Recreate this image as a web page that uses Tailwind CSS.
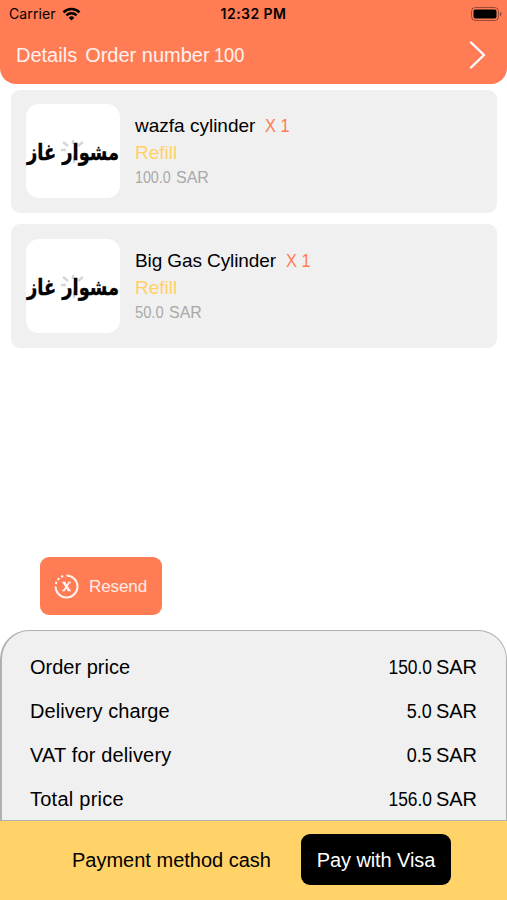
<!DOCTYPE html>
<html lang="en">
<head>
    <meta charset="UTF-8">
    <meta name="viewport" content="width=device-width, initial-scale=1.0">
    <title>Order Details</title>
    <script src="https://cdn.jsdelivr.net/npm/@tailwindcss/browser@4"></script>
</head>
<body class="bg-white font-['Liberation_Sans',Arial,sans-serif] text-xl text-black">
<div class="w-[507px] h-[900px] flex flex-col overflow-hidden">

  <!-- Header -->
  <header class="h-[84px] shrink-0 bg-[#ff7c54] rounded-b-[16px]">
    <div class="h-[27px] px-[9px] grid grid-cols-3 items-center font-[Inter,sans-serif] text-[14px]">
      <div class="flex items-center gap-[6px]">
        <span class="tracking-[0.1px]">Carrier</span>
        <svg width="19" height="14" viewBox="0 0 18 14" fill="none" stroke="#000" stroke-width="2.5">
          <path d="M1 5.3a11.5 11.5 0 0 1 16 0M3.9 8.4a7.4 7.4 0 0 1 10.2 0" />
          <path d="M9 13.5 6.2 10.7a4 4 0 0 1 5.6 0z" fill="#000" stroke="none" />
        </svg>
      </div>
      <span class="text-center font-semibold whitespace-nowrap tracking-[0.45px]">12:32 PM</span>
      <svg class="justify-self-end -mr-[4px]" width="31" height="14" viewBox="0 0 31 14">
        <rect x=".5" y=".5" width="27" height="13" rx="4" fill="none" stroke="#000" stroke-opacity=".4" />
        <rect x="2.5" y="2.5" width="23" height="9" rx="2" />
        <path d="M29 4.8c2 .8 2 3.6 0 4.4z" fill-opacity=".45" />
      </svg>
    </div>
    <div class="h-[55px] pl-[16px] pr-[21px] flex items-center justify-between text-white/90">
      <h1 class="flex whitespace-pre leading-6"><span class="mr-[8px]">Details</span><span>Order number</span><span class="ml-[4px] inline-block origin-left scale-x-[0.91]">100</span></h1>
      <svg width="17" height="28" viewBox="0 0 17 28" fill="none" stroke="#fff" stroke-width="2.4" stroke-linecap="round" stroke-linejoin="round">
        <path d="M2 1.5 15 14 2 26.5" />
      </svg>
    </div>
  </header>

  <!-- Order items -->
  <main class="h-[546px] shrink-0 pt-[6px] px-[11px] flex flex-col">
    <div class="h-[123px] w-[486px] pl-[15px] flex items-center bg-[#f0f0f0] rounded-[9px]">
      <div class="size-[94px] -mt-px bg-white rounded-[13px]">
        <svg class="overflow-visible" width="94" height="94" viewBox="0 0 94 94">
          <path d="M47 40v-4M42 42l-5-4M52 42l5-4M40 46h-5M48 52v7" stroke="#d6d6d6" stroke-width="2.5" />
          <text x="47" y="56" text-anchor="middle" textLength="92" lengthAdjust="spacingAndGlyphs" direction="rtl" font-family="DejaVu Sans" font-weight="bold" font-size="22" stroke="#000" stroke-width=".4">مشوار غاز</text>
        </svg>
      </div>
      <div class="ml-[15px] -mt-px flex flex-col">
        <p class="h-[27px] flex text-[19px] leading-[27px]"><span>wazfa cylinder</span><span class="ml-[10px] inline-block origin-left scale-x-[0.86] text-[#ff7c54]">X 1</span></p>
        <p class="h-[26px] text-[19px] leading-[27px] text-[#ffd068]">Refill</p>
        <p class="h-[25px] flex text-base leading-[25px] text-[#a9a9a9]"><span class="w-[36px] mr-[5px] inline-block origin-left scale-x-[0.89]">100.0</span><span>SAR</span></p>
      </div>
    </div>
    <div class="mt-[11px] h-[124px] w-[486px] pl-[15px] flex items-center bg-[#f0f0f0] rounded-[9px]">
      <div class="size-[94px] bg-white rounded-[13px]">
        <svg class="overflow-visible" width="94" height="94" viewBox="0 0 94 94">
          <path d="M47 40v-4M42 42l-5-4M52 42l5-4M40 46h-5M48 52v7" stroke="#d6d6d6" stroke-width="2.5" />
          <text x="47" y="56" text-anchor="middle" textLength="92" lengthAdjust="spacingAndGlyphs" direction="rtl" font-family="DejaVu Sans" font-weight="bold" font-size="22" stroke="#000" stroke-width=".4">مشوار غاز</text>
        </svg>
      </div>
      <div class="ml-[15px] flex flex-col">
        <p class="h-[27px] flex text-[19px] leading-[27px]"><span class="tracking-[-0.1px]">Big Gas Cylinder</span><span class="ml-[10px] inline-block origin-left scale-x-[0.86] text-[#ff7c54]">X 1</span></p>
        <p class="h-[26px] text-[19px] leading-[27px] text-[#ffd068]">Refill</p>
        <p class="h-[25px] flex text-base leading-[25px] text-[#a9a9a9]"><span class="w-[29px] mr-[5px] inline-block origin-left scale-x-[0.92]">50.0</span><span>SAR</span></p>
      </div>
    </div>

    <button class="mt-auto mb-[15px] ml-[29px] h-[58px] w-[122px] pl-[14px] flex items-center gap-[10px] bg-[#ff7c54] rounded-[9px] text-[17px] text-white/85">
      <svg width="25" height="25" viewBox="0 0 25 25" fill="none" stroke="#fff" stroke-opacity=".9" stroke-width="2">
        <path d="M12.5 1.5a11 11 0 1 1-11 11" />
        <path d="M1.8 10A11 11 0 0 1 10 1.8" stroke-dasharray="2.4 2" />
        <path d="M10 8.5l5 8" stroke-width="2.6" />
        <path d="M15 8.5l-5 8M8.3 8.5h3M14 8.5h2.8M8.3 16.5H11M13.8 16.5h3" stroke-width="1.6" />
      </svg>
      <span class="pt-[2px] tracking-[-0.1px]">Resend</span>
    </button>
  </main>

  <!-- Totals -->
  <section class="h-[191px] shrink-0 pt-[14px] pl-[28px] pr-[29px] bg-[#f0f0f0] border border-l-2 border-[#b0b0b0] rounded-t-[29px]">
    <div class="h-[44px] flex items-center justify-between"><span>Order price</span><span class="flex gap-[4px]"><span class="inline-block origin-right scale-x-[0.87]">150.0</span><span>SAR</span></span></div>
    <div class="h-[44px] flex items-center justify-between"><span class="tracking-[0.05px]">Delivery charge</span><span class="flex gap-[4px]"><span class="inline-block origin-right scale-x-[0.9]">5.0</span><span>SAR</span></span></div>
    <div class="h-[44px] flex items-center justify-between"><span class="tracking-[0.15px]">VAT for delivery</span><span class="flex gap-[4px]"><span class="inline-block origin-right scale-x-[0.9]">0.5</span><span>SAR</span></span></div>
    <div class="h-[44px] flex items-center justify-between"><span class="tracking-[0.25px]">Total price</span><span class="flex gap-[4px]"><span class="inline-block origin-right scale-x-[0.87]">156.0</span><span>SAR</span></span></div>
  </section>

  <!-- Payment -->
  <footer class="h-[79px] shrink-0 pl-[72px] pb-[2px] flex items-center bg-[#ffd368]">
    <span class="w-[229px] whitespace-nowrap">Payment method cash</span>
    <button class="h-[51px] w-[150px] bg-black text-white rounded-[9px] whitespace-nowrap tracking-[-0.1px]">Pay with Visa</button>
  </footer>
</div>
</body>
</html>
